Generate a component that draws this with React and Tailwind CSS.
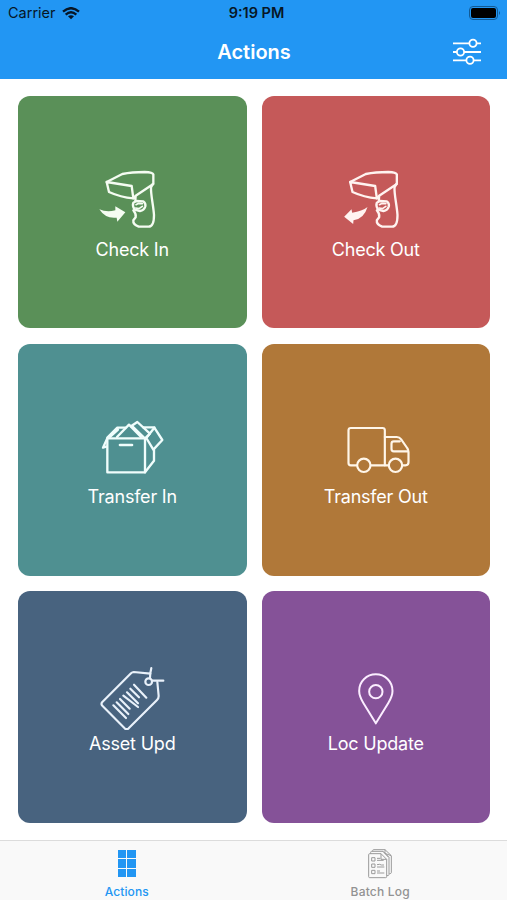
import React from 'react';

const ScannerBody = () => (
    <>
        <path d="M74 66 L121 42 Q150 36 188 36 Q212 37 214 43 L214 69 L207 82 C206 105 214 135 216 165 C216 187 210 200 200 200 L170 200 C160 196 153 188 154 181 L161 172 Q163 162 154 151" />
        <path d="M74 66 L149 78 L154 115 Q116 112 81 96 Z" />
        <path d="M154 115 L161 107 L214 72 M161 107 L160 123" />
        <path d="M154 128 L163 123 L184 124 Q192 130 190 139 Q186 151 174 153 L158 149 Q150 138 154 128 Z" />
        <path d="M162 134 L170 130 L181 131 M161 144 L171 146 L181 139" strokeWidth="5" />
    </>
);

const CheckInIcon = () => (
    <svg className="w-[100px] h-[75px]" viewBox="0 0 300 225" fill="none" stroke="#f5fcf2" strokeWidth="7" strokeLinejoin="round" strokeLinecap="round">
        <ScannerBody />
        <path d="M52 148 Q74 158 100 151 L100 139 L130 157 L106 185 L104 173 Q70 177 52 148 Z" fill="#f5fcf2" stroke="none" />
    </svg>
);

const CheckOutIcon = () => (
    <svg className="w-[100px] h-[75px]" viewBox="1.5 0 300 225" fill="none" stroke="#fff3f0" strokeWidth="7" strokeLinejoin="round" strokeLinecap="round">
        <ScannerBody />
        <path d="M126 141 Q110 154 80 158 L78 148 L56 170 L83 192 L84 181 Q116 176 126 141 Z" fill="#fff3f0" stroke="none" />
    </svg>
);

const BoxIcon = () => (
    <svg className="w-[100px] h-[75px]" viewBox="0 -9 300 225" fill="none" stroke="#f0fdfc" strokeWidth="7" strokeLinejoin="round" strokeLinecap="round">
        <path d="M76 82 H189 V184 H76 Z" />
        <path d="M76 82 L63 110 L73 107 M76 80 L106 50 L130 50 M84 78 L108 56" />
        <path d="M105 78 L141 41 L177 78" />
        <path d="M147 46 L166 33 L203 67 M152 47 L186 80" />
        <path d="M184 49 H217 M189 82 L203 69" />
        <path d="M217 50 L241 87 L214 116 L193 81 Z" />
        <path d="M216 116 V149 L189 184" />
        <path d="M114 102 H150" strokeWidth="8" />
    </svg>
);

const TruckIcon = () => (
    <svg className="w-[100px] h-[75px]" viewBox="16.5 -9 300 225" fill="none" stroke="#fff6e9" strokeWidth="6.5" strokeLinejoin="round" strokeLinecap="round">
        <path d="M108 163 H91 Q84 163 84 156 V58 Q84 51 91 51 H186 Q193 51 193 58 V163 H151" />
        <path d="M193 78 H229 Q237 78 242 85 L260 111 Q264 116 264 123 V154 Q264 163 255 163 H246 M193 163 H204" />
        <path d="M238 91 H220 Q213 91 213 98 V114 Q213 121 220 121 H262" />
        <circle cx="130" cy="163" r="20" />
        <circle cx="225" cy="163" r="20" />
    </svg>
);

const TagIcon = () => (
    <svg className="w-[100px] h-[75px]" viewBox="0 -3 300 225" fill="none" stroke="#e9f1fa" strokeWidth="6.5" strokeLinejoin="round" strokeLinecap="round">
        <path d="M205 53 L155 48 Q151 48 147 52 L61 138 Q56 144 61 149 L128 217 Q134 222 140 217 L225 132 Q230 127 230 120 L226 78" />
        <circle cx="200" cy="77" r="10" />
        <path d="M211 74 H244 M204 65 L205 51 L208 36" />
        <path d="M94 148 L132 186 M104 139 L139 174 M114 129 L143 158 M124 119 L168 153 M135 109 L168 142 M145 98 L171 124 M156 86 L193 125" />
    </svg>
);

const PinIcon = () => (
    <svg className="w-[100px] h-[75px]" viewBox="16.5 -3 300 225" fill="none" stroke="#fbedff" strokeWidth="6" strokeLinejoin="round">
        <path d="M166 202 L129 142 Q116 120 116 105 C116 76 139 55 166 55 C193 55 216 76 216 105 Q216 120 203 142 Z" />
        <circle cx="166" cy="107" r="20" />
    </svg>
);

const WifiIcon = () => (
    <svg className="w-[18px] h-[13px]" viewBox="0 0 54 39" fill="none" stroke="#071626" strokeWidth="7">
        <path d="M3 14 Q27 -7 51 14" />
        <path d="M11 23 Q27 9 43 23" />
        <path d="M18 28 Q27 21 36 28 L27 37 Z" fill="#071626" stroke="none" />
    </svg>
);

const BatteryIcon = () => (
    <svg className="w-8 h-[14px]" viewBox="0 0 32 14">
        <rect x="0.5" y="0.5" width="28" height="13" rx="3.5" fill="none" stroke="#125a94" />
        <rect x="2" y="2" width="25" height="10" rx="2" fill="#000" />
        <path d="M30 5 Q32 7 30 9 Z" fill="#125a94" />
    </svg>
);

const SlidersIcon = () => (
    <svg className="w-7 h-[27px]" viewBox="0 0 28 27" fill="none" stroke="#fff" strokeWidth="1.8">
        <path d="M0 5.3 H16.5 M23.5 5.3 H28 M0 14 H4 M11 14 H28 M0 22.3 H13.5 M20.5 22.3 H28" />
        <circle cx="20" cy="5.3" r="3.6" />
        <circle cx="7.5" cy="14" r="3.6" />
        <circle cx="17" cy="22.3" r="3.6" />
    </svg>
);

const BatchLogIcon = () => (
    <svg className="w-6 h-[30px]" viewBox="0 0 72 90" fill="none" stroke="#9b9b9b" strokeWidth="3" strokeLinejoin="round">
        <path d="M2 17 Q2 14 5 14 H39 L56 31 V83 Q56 86 53 86 H5 Q2 86 2 83 Z" />
        <path d="M39 14 V31 H56" />
        <path d="M8 14 V10 Q8 7 11 7 H45 L63 25 V77 Q63 80 57 80" />
        <path d="M14 7 V5 Q14 2 17 2 H51 L70 20 V71 Q70 74 64 74 M45 7 L62 25 M51 2 V13 L69 20" />
        <path d="M11 26 H21 V36 H11 Z M11 45 H21 V55 H11 Z M11 64 H21 V74 H11 Z" />
        <path d="M27 28 H37 M27 34 H47 M27 47 L35 46 L40 48 H48 M27 54 H49 M27 66 H36 M27 72 H49" />
    </svg>
);

const actions = [
    { label: 'Check In', color: 'bg-[#5a9058]', Icon: CheckInIcon },
    { label: 'Check Out', color: 'bg-[#c55959]', Icon: CheckOutIcon },
    { label: 'Transfer In', color: 'bg-[#4f9091]', Icon: BoxIcon },
    { label: 'Transfer Out', color: 'bg-[#b07839]', Icon: TruckIcon },
    { label: 'Asset Upd', color: 'bg-[#48637f]', Icon: TagIcon },
    { label: 'Loc Update', color: 'bg-[#855298]', Icon: PinIcon },
];

const ActionTile = ({ label, color, Icon }) => (
    <button className={`${color} h-[232px] rounded-xl flex flex-col items-center pt-[64px] text-white`}>
        <Icon />
        <span className="mt-[2.5px] text-[18px] leading-6 tracking-[-0.2px] whitespace-nowrap">{label}</span>
    </button>
);

const App = () => {
    return (
        <div className="w-[507px] h-[900px] flex flex-col overflow-hidden bg-white font-['Inter',sans-serif]">
            <header className="h-[79px] bg-[#2296f3]">
                <div className="h-[26px] grid grid-cols-3 items-center pl-2 pr-[6px] text-[#071626]">
                    <div className="flex items-center gap-[6px] text-[14.5px]">
                        <span>Carrier</span>
                        <WifiIcon />
                    </div>
                    <span className="pl-1 text-center text-[14.5px] font-semibold">9:19 PM</span>
                    <div className="flex justify-end">
                        <BatteryIcon />
                    </div>
                </div>
                <div className="h-[51px] grid grid-cols-3 items-center pl-[27px] pr-[26px]">
                    <span />
                    <h1 className="text-center text-[20px] font-semibold text-white">Actions</h1>
                    <div className="flex justify-end">
                        <SlidersIcon />
                    </div>
                </div>
            </header>

            <main className="flex-1 grid grid-cols-2 content-start gap-x-[15px] gap-y-[15.3px] pt-[17.3px] pl-[18px] pr-[17px]">
                {actions.map((action) => (
                    <ActionTile key={action.label} {...action} />
                ))}
            </main>

            <nav className="h-[60px] grid grid-cols-2 border-t border-[#dcdcdc] bg-[#f9f9f9] text-[12px] font-medium">
                <button className="flex flex-col items-center pt-[9px] text-[#2296f3]">
                    <span className="grid grid-cols-2 gap-px w-[18px] h-[27px]">
                        {Array(6).fill(0).map((_, i) => (
                            <span key={i} className="bg-[#2296f3]" />
                        ))}
                    </span>
                    <span className="mt-[7px] leading-4 tracking-[0.1px]">Actions</span>
                </button>
                <button className="flex flex-col items-center pt-2 text-[#929292]">
                    <BatchLogIcon />
                    <span className="mt-[5px] leading-4 tracking-[0.2px]">Batch Log</span>
                </button>
            </nav>
        </div>
    );
};

export default App;
